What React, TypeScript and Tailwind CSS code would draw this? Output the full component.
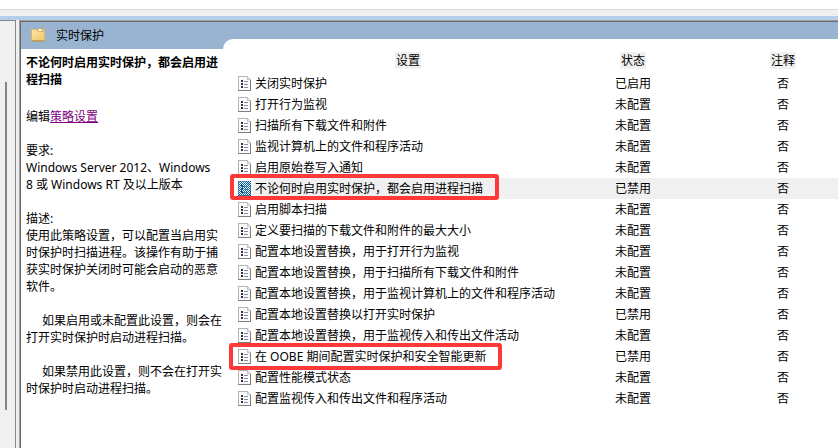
import clsx from "clsx";

type PolicyState = "已启用" | "已禁用" | "未配置";

interface Policy {
  name: string;
  state: PolicyState;
  comment: string;
  selected?: boolean;
  markClass?: string;
}

const policies: Policy[] = [
  { name: "关闭实时保护", state: "已启用", comment: "否" },
  { name: "打开行为监视", state: "未配置", comment: "否" },
  { name: "扫描所有下载文件和附件", state: "未配置", comment: "否" },
  { name: "监视计算机上的文件和程序活动", state: "未配置", comment: "否" },
  { name: "启用原始卷写入通知", state: "未配置", comment: "否" },
  {
    name: "不论何时启用实时保护，都会启用进程扫描",
    state: "已禁用",
    comment: "否",
    selected: true,
    markClass: "left-[7px] -top-1 w-[269px] h-[26px]",
  },
  { name: "启用脚本扫描", state: "未配置", comment: "否" },
  { name: "定义要扫描的下载文件和附件的最大大小", state: "未配置", comment: "否" },
  { name: "配置本地设置替换，用于打开行为监视", state: "未配置", comment: "否" },
  { name: "配置本地设置替换，用于扫描所有下载文件和附件", state: "未配置", comment: "否" },
  { name: "配置本地设置替换，用于监视计算机上的文件和程序活动", state: "未配置", comment: "否" },
  { name: "配置本地设置替换以打开实时保护", state: "已禁用", comment: "否" },
  { name: "配置本地设置替换，用于监视传入和传出文件活动", state: "未配置", comment: "否" },
  {
    name: "在 OOBE 期间配置实时保护和安全智能更新",
    state: "已禁用",
    comment: "否",
    markClass: "left-[6px] -top-[3px] w-[273px] h-[27px]",
  },
  { name: "配置性能模式状态", state: "未配置", comment: "否" },
  { name: "配置监视传入和传出文件和程序活动", state: "未配置", comment: "否" },
];

function FolderIcon() {
  return (
    <svg width="16" height="16" viewBox="0 0 16 16" aria-hidden="true">
      <defs>
        <linearGradient id="folder" x1="0" y1="0" x2="1" y2="1">
          <stop offset="0" stopColor="#ffe9a6" />
          <stop offset="1" stopColor="#eec566" />
        </linearGradient>
      </defs>
      <path d="M6.5 4V1.5L7.5 .5H12.5L13.5 1.5V5H6.5Z" fill="#f3d68a" stroke="#d3a64c" />
      <path d="M8 2H11" stroke="#fff" strokeWidth="2" />
      <path d="M10 2H12" stroke="#86a5bd" />
      <path d="M.5 1.5H5.5L7 3.5H13.5V12.5H.5Z" fill="url(#folder)" stroke="#dcb862" />
      <path d="M0 13H14" stroke="#b98c3c" />
    </svg>
  );
}

function PolicyIcon({ selected }: { selected?: boolean }) {
  return (
    <svg
      width="13"
      height="15"
      viewBox="0 0 13 15"
      shapeRendering="crispEdges"
      className="shrink-0"
      aria-hidden="true"
    >
      <defs>
        <pattern id="dither" width="2" height="2" patternUnits="userSpaceOnUse">
          <path d="M0 0H1V1H0ZM1 1H2V2H1Z" fill="#0067b0" />
        </pattern>
      </defs>
      <path d="M0 0H9L13 4V15H0Z" fill="#fbfbfb" />
      <path d="M0 0H9V1H1V14H0Z" fill="#b4b4b4" />
      <path d="M12 4H13V15H0V14H12Z" fill="#7f7f7f" />
      <path d="M9 0H10V1H11V2H12V3H13V4H9Z" fill="#c3c3c3" />
      <path d="M10 2H11V3H10Z" fill="#fff" />
      <path d="M3 4H5V6H3ZM3 7H5V9H3ZM3 10H5V12H3Z" fill="#32323c" />
      <path d="M6 5H10V6H6ZM6 8H10V9H6ZM6 11H10V12H6Z" fill="#8c8ca8" />
      {selected && <path d="M0 0H13V15H0Z" fill="url(#dither)" />}
    </svg>
  );
}

function DescriptionPane() {
  return (
    <aside className="w-[202px] shrink-0 flex flex-col">
      <header className="h-[27px] shrink-0 flex items-center gap-[9px] pl-[10px]">
        <FolderIcon />
        <h1>实时保护</h1>
      </header>
      <div className="flex-1 bg-white pl-[5px] pt-[5px]">
        <h2 className="font-bold">不论何时启用实时保护，都会启用进程扫描</h2>
        <p className="mt-5">
          编辑
          <a href="#edit" className="text-[#800080] underline">
            策略设置
          </a>
        </p>
        <h3 className="mt-[17px]">要求:</h3>
        <p className="pr-1">Windows Server 2012、Windows 8 或 Windows RT 及以上版本</p>
        <h3 className="mt-[17px]">描述:</h3>
        <p>使用此策略设置，可以配置当启用实时保护时扫描进程。该操作有助于捕获实时保护关闭时可能会启动的恶意软件。</p>
        <p className="mt-[17px] indent-4">如果启用或未配置此设置，则会在打开实时保护时启动进程扫描。</p>
        <p className="mt-[17px] indent-4">如果禁用此设置，则不会在打开实时保护时启动进程扫描。</p>
      </div>
    </aside>
  );
}

function PolicyTable() {
  return (
    <table className="w-full min-w-[660px] table-fixed border-collapse">
      <colgroup>
        <col className="w-[360px]" />
        <col className="w-[100px]" />
        <col />
      </colgroup>
      <thead>
        <tr className="h-[21px] align-top">
          <th className="p-0 pl-[10px] font-normal">
            <span className="inline-block bg-[#f0f0f0] px-px">设置</span>
          </th>
          <th className="p-0 font-normal">
            <span className="inline-block bg-[#f0f0f0] px-px">状态</span>
          </th>
          <th className="p-0 font-normal">
            <span className="inline-block bg-[#f0f0f0] px-px">注释</span>
          </th>
        </tr>
      </thead>
      <tbody>
        {policies.map((policy) => {
          const rowBg = policy.selected && "bg-[#f0f0f0]";
          return (
            <tr key={policy.name} className="h-[21px]">
              <td className="p-0">
                <div className="relative flex items-center gap-[2px] pl-[15px]">
                  <PolicyIcon selected={policy.selected} />
                  <span className={clsx("flex-1 pl-[2px] leading-[21px] whitespace-nowrap", rowBg)}>
                    {policy.name}
                  </span>
                  {policy.markClass && (
                    <span
                      className={clsx(
                        "absolute rounded-[3px] border-4 border-[#ff3838] pointer-events-none",
                        policy.markClass
                      )}
                    />
                  )}
                </div>
              </td>
              <td className={clsx("p-0 text-center", rowBg)}>{policy.state}</td>
              <td className={clsx("p-0 text-center", rowBg)}>{policy.comment}</td>
            </tr>
          );
        })}
      </tbody>
    </table>
  );
}

export default function App() {
  return (
    <div
      lang="zh-CN"
      className="min-h-screen flex flex-col overflow-hidden bg-[#f0f0f0] text-black text-[12px] leading-[17px] font-['Noto_Sans','Noto_Sans_CJK_SC',sans-serif]"
    >
      <div className="h-[10px] bg-white border-b border-[#d9d9d9]" />
      <div className="h-[10px] border-b-4 border-[#b4cfe9]" />

      <div className="flex-1 flex gap-[3px]">
        {/* Tree pane, scrolled almost out of view */}
        <div className="w-4 shrink-0 border-t border-r border-[#828790] pt-[61px] pl-[5px]">
          <div className="w-[2px] h-[328px] bg-[#858585]" />
        </div>

        {/* Sunken frame: light outer line, dark inner line */}
        <div className="flex-1 min-w-0 flex border-t border-l border-[#a0a0a0]">
          <main className="flex-1 min-w-0 flex border-t border-l border-[#696969] bg-[#99b4d1]">
            <DescriptionPane />
            <section className="flex-1 min-w-0 mt-[17px] rounded-tl-[10px] bg-white pt-[13px] pb-10 overflow-hidden">
              <PolicyTable />
            </section>
          </main>
        </div>
      </div>
    </div>
  );
}
